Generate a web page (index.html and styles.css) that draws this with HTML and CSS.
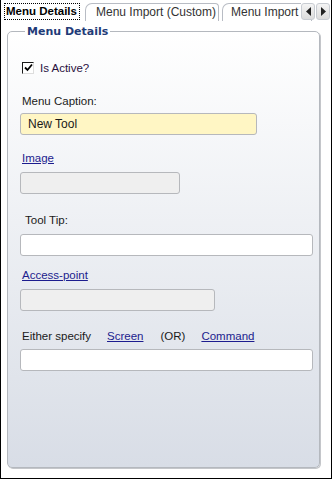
FILE: index.html
```html
<!DOCTYPE html>
<html lang="en">
<head>
  <meta charset="UTF-8">
  <link rel="stylesheet" href="styles.css">
</head>
<body>
  <div class="window">
    <div class="tabs">
      <div class="tab active"><span class="focus">Menu Details</span></div>
      <div class="tab">Menu Import (Custom)</div>
      <div class="tab clipped">Menu Import</div>
      <div class="scroll">
        <button class="arrow"><svg width="7" height="9" viewBox="0 0 7 9"><path d="M6 0 L1 4.5 L6 9 Z" fill="#222"/></svg></button>
        <button class="arrow"><svg width="7" height="9" viewBox="0 0 7 9"><path d="M1 0 L6 4.5 L1 9 Z" fill="#222"/></svg></button>
      </div>
    </div>
    <div class="page">
      <fieldset class="group">
        <legend>Menu Details</legend>
        <label class="check"><span class="box"><svg width="9" height="9" viewBox="0 0 9 9"><path d="M1 4.5 L3.5 7 L8 1.5" stroke="#000" stroke-width="1.8" fill="none"/></svg></span>Is Active?</label>
        <div class="label first">Menu Caption:</div>
        <div class="input caption">New Tool</div>
        <a class="link" href="#">Image</a>
        <div class="input disabled short"></div>
        <div class="label tip">Tool Tip:</div>
        <div class="input full"></div>
        <a class="link access" href="#">Access-point</a>
        <div class="input disabled mid"></div>
        <div class="either">
          <span>Either specify</span>
          <a href="#">Screen</a>
          <span>(OR)</span>
          <a href="#">Command</a>
        </div>
        <div class="input full"></div>
      </fieldset>
    </div>
  </div>
</body>
</html>
```

FILE: styles.css
```css
* {
  margin: 0;
  padding: 0;
  box-sizing: border-box;
}

body {
  font-family: "Liberation Sans", Arial, sans-serif;
  font-size: 11.5px;
  color: #1a1a1a;
  background: #fff;
}

.window {
  width: 332px;
  height: 479px;
  border: 1px solid #000;
  border-top: none;
  display: flex;
  flex-direction: column;
}

.tabs {
  height: 21px;
  display: flex;
  align-items: flex-end;
  padding-left: 2px;
  position: relative;
  overflow: hidden;
  font-size: 12px;
}

.tab {
  flex: none;
  width: 134px;
  height: 18px;
  padding: 0 0 0 10px;
  border: 1px solid #b8bcc4;
  border-bottom: none;
  border-radius: 7px 4px 0 0;
  color: #333;
  line-height: 17px;
  white-space: nowrap;
  margin-left: 4px;
}

.tab.active {
  width: 78px;
  height: 20px;
  margin-left: 0;
  padding: 2px 1px 1px 1px;
  border: none;
  color: #000;
  font-size: 11.5px;
  font-weight: bold;
  line-height: 15px;
}

.focus {
  display: block;
  border: 1px dotted #000;
  padding: 0 1px;
}

.tab.clipped {
  width: 90px;
  margin-left: 3px;
  padding-left: 8px;
}

.scroll {
  position: absolute;
  right: 1px;
  top: 3px;
  display: flex;
  gap: 1px;
  background: #fff;
}

.arrow {
  width: 14px;
  height: 17px;
  border: 1px solid #c8ccd2;
  border-radius: 3px;
  background: linear-gradient(#f4f4f4, #dcdcdc);
  display: flex;
  align-items: center;
  justify-content: center;
}

.page {
  flex: 1;
  padding: 4px 11px 10px 6px;
}

.group {
  height: 100%;
  border: 1px solid #b4b8be;
  border-radius: 5px;
  padding: 23px 6px 0 12px;
  background: linear-gradient(#ffffff, #d8dde6);
  box-shadow: 1px 1px 0 #c4c6ca;
  display: flex;
  flex-direction: column;
  align-items: flex-start;
}

legend {
  margin-left: 5px;
  padding: 0 2px;
  font-family: "DejaVu Sans", Verdana, sans-serif;
  font-size: 11px;
  font-weight: bold;
  color: #1f3c78;
}

.check {
  display: flex;
  align-items: center;
  gap: 6px;
  padding-left: 2px;
  height: 13px;
  color: #2a1040;
}

.box {
  width: 12px;
  height: 12px;
  border: 1px solid #1a1a1a;
  border-right-color: #ddd;
  border-bottom-color: #ddd;
  background: #fff;
  display: flex;
  align-items: center;
  justify-content: center;
}

.label {
  padding-left: 2px;
  height: 14px;
  line-height: 14px;
}

.label.first {
  margin-top: 20px;
}

.label.first + .input {
  margin-top: 5px;
}

.label.tip {
  margin-top: 19px;
  padding-left: 5px;
}

.link {
  margin-top: 16px;
  padding-left: 2px;
  height: 14px;
  line-height: 14px;
  color: #1c1c8e;
}

.link.access {
  margin-top: 12px;
}

.input {
  margin-top: 7px;
  height: 22px;
  border: 1px solid #b6b8bc;
  border-radius: 3px;
  background: #fff;
  padding-left: 7px;
  line-height: 20px;
  font-size: 12px;
}

.either + .input {
  margin-top: 6px;
}

.caption {
  width: 237px;
  background: #fff6c4;
}

.disabled {
  background: #efefef;
}

.short {
  width: 160px;
}

.mid {
  width: 195px;
}

.full {
  width: 293px;
}

.either {
  margin-top: 18px;
  padding-left: 2px;
  height: 14px;
  line-height: 14px;
  display: flex;
}

.either a {
  color: #1c1c8e;
  margin-left: 16px;
}

.either a + span {
  margin-left: 17px;
}
```
